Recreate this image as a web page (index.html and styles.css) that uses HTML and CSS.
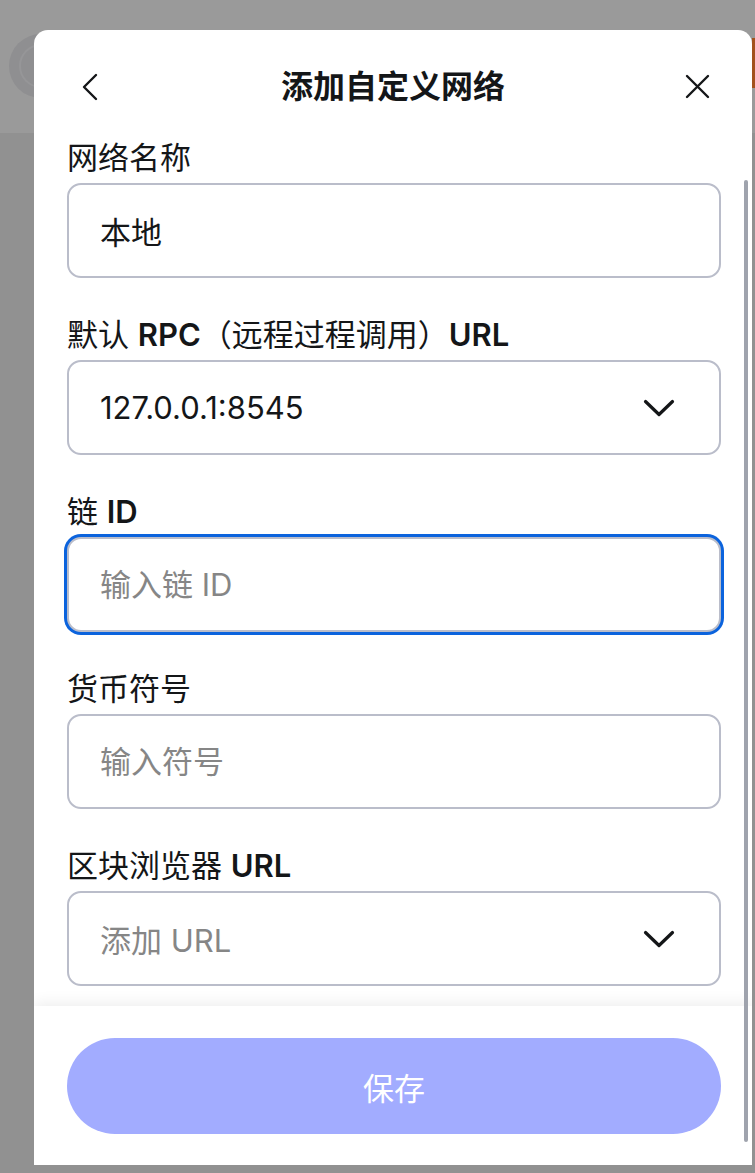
FILE: index.html
```html
<!DOCTYPE html>
<html lang="zh-CN">
<head>
<meta charset="utf-8">
<title>添加自定义网络</title>
<link rel="stylesheet" href="styles.css">
</head>
<body>
<div class="app-bg">
  <div class="app-header">
    <div class="avatar"><div class="avatar-inner"></div></div>
    <div class="app-accent"></div>
  </div>
</div>

<div class="modal">
  <header class="modal-header">
    <button class="icon-btn" aria-label="返回">
      <svg width="40" height="40" viewBox="0 0 40 40"><path d="M27 8 L15 20 L27 32" fill="none" stroke="#141618" stroke-width="2.4" stroke-linecap="round" stroke-linejoin="round"/></svg>
    </button>
    <h2 class="modal-title">添加自定义网络</h2>
    <button class="icon-btn" aria-label="关闭">
      <svg width="40" height="40" viewBox="0 0 40 40"><path d="M10 9 L31 30 M31 9 L10 30" fill="none" stroke="#141618" stroke-width="2.4" stroke-linecap="round"/></svg>
    </button>
  </header>

  <div class="modal-body">
    <div class="field">
      <label class="field-label">网络名称</label>
      <input class="input" type="text" value="本地">
    </div>
    <div class="field">
      <label class="field-label">默认 <b>RPC</b>（远程过程调用）<b>URL</b></label>
      <div class="input select">
        <span class="select-value">127.0.0.1:8545</span>
        <svg class="chev" width="32" height="18" viewBox="0 0 32 18"><path d="M2.5 2.5 L16 15.5 L29.5 2.5" fill="none" stroke="#141618" stroke-width="3.2" stroke-linecap="round" stroke-linejoin="round"/></svg>
      </div>
    </div>
    <div class="field">
      <label class="field-label">链 <b>ID</b></label>
      <input class="input focused" type="text" placeholder="输入链 ID">
    </div>
    <div class="field">
      <label class="field-label">货币符号</label>
      <input class="input" type="text" placeholder="输入符号">
    </div>
    <div class="field">
      <label class="field-label">区块浏览器 <b>URL</b></label>
      <div class="input select">
        <span class="select-placeholder">添加 URL</span>
        <svg class="chev" width="32" height="18" viewBox="0 0 32 18"><path d="M2.5 2.5 L16 15.5 L29.5 2.5" fill="none" stroke="#141618" stroke-width="3.2" stroke-linecap="round" stroke-linejoin="round"/></svg>
      </div>
    </div>
  </div>

  <footer class="modal-footer">
    <button class="btn-save">保存</button>
  </footer>

  <div class="scroll-thumb"></div>
</div>
</body>
</html>
```

FILE: styles.css
```css
* { box-sizing: border-box; }

html, body {
  margin: 0;
  padding: 0;
  height: 100%;
}

body {
  background: #919191;
  font-family: Inter, "Noto Sans CJK SC", sans-serif;
  color: #141618;
  overflow: hidden;
}

.app-header {
  height: 133px;
  background: #9a9a9a;
  position: relative;
}

.avatar {
  position: absolute;
  left: 9px;
  top: 34px;
  width: 64px;
  height: 64px;
  border-radius: 50%;
  background: #8f8f91;
  display: flex;
  align-items: center;
  justify-content: center;
}

.avatar-inner {
  width: 44px;
  height: 44px;
  border-radius: 50%;
  border: 2px solid #969698;
}

.app-accent {
  position: absolute;
  right: 0;
  top: 38px;
  width: 3px;
  height: 50px;
  background: #a3521e;
}

.modal {
  position: absolute;
  left: 34px;
  top: 30px;
  width: 718px;
  height: 1135px;
  background: #ffffff;
  border-radius: 14px 14px 0 0;
  display: flex;
  flex-direction: column;
  overflow: hidden;
}

.modal-header {
  display: grid;
  grid-template-columns: 40px 1fr 40px;
  align-items: center;
  height: 80px;
  padding: 34px 35px 0 35px;
  flex: none;
}

.icon-btn {
  width: 40px;
  height: 46px;
  padding: 0;
  border: 0;
  background: none;
  display: flex;
  align-items: center;
  justify-content: center;
}

.modal-title {
  margin: 0;
  text-align: center;
  font-size: 32px;
  line-height: 46px;
  font-weight: 700;
  color: #141618;
}

.modal-body {
  flex: 1;
  overflow: hidden;
  padding: 27px 31px 0 33px;
}

.field {
  margin-bottom: 36px;
}

.field-label {
  display: block;
  font-size: 31px;
  line-height: 42px;
  font-weight: 400;
  margin-bottom: 4px;
  color: #141618;
}

.field-label b {
  font-weight: 600;
}

.input {
  display: flex;
  align-items: center;
  width: 100%;
  height: 95px;
  border: 2px solid #babdca;
  border-radius: 14px;
  padding: 0 44px 0 31px;
  font-family: inherit;
  font-size: 31px;
  color: #141618;
  background: #ffffff;
  outline: none;
}

.input::placeholder {
  color: #868686;
}

.input.focused {
  box-shadow: 0 0 0 3px #0b63dd;
}

.select {
  justify-content: space-between;
}

.select-placeholder {
  color: #868686;
}

.chev {
  flex: none;
}

.modal-footer {
  flex: none;
  height: 159px;
  padding: 32px 31px 31px 33px;
  background: #ffffff;
  box-shadow: 0 -3px 14px rgba(0, 0, 0, 0.07);
  position: relative;
}

.btn-save {
  width: 100%;
  height: 96px;
  border: 0;
  border-radius: 48px;
  background: #a2acff;
  color: #ffffff;
  font-family: inherit;
  font-size: 31px;
}

.scroll-thumb {
  position: absolute;
  right: 4px;
  top: 150px;
  width: 4px;
  height: 962px;
  border-radius: 2px;
  background: #9fa3ad;
}
```
